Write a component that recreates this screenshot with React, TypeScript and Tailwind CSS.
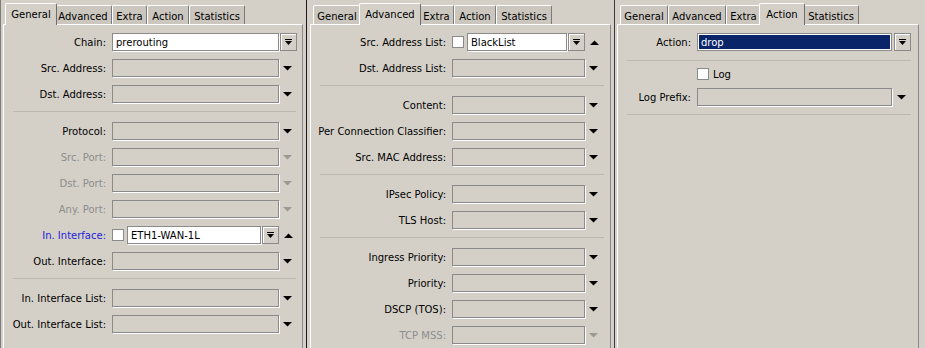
type Tone = "normal" | "disabled" | "blue";

interface Field {
	label: string;
	tone?: Tone;
	value?: string;
	check?: boolean;
}

type Item = Field | "sep";

const TABS: [string, string, string][] = [
	["General", "w-[48px]", "w-[52px]"],
	["Advanced", "w-[58px]", "w-[62px]"],
	["Extra", "w-[35px]", "w-[39px]"],
	["Action", "w-[42px]", "w-[46px]"],
	["Statistics", "w-[56px]", "w-[60px]"],
];

const labelColor = (tone?: Tone) =>
	tone === "disabled" ? "text-[#8d8d8d]" : tone === "blue" ? "text-[#2323d8]" : "text-black";

const Tri = (props: { up?: boolean; grey?: boolean }) => (
	<svg width="9" height="5" viewBox="0 0 9 5" className="block">
		<polygon
			points={props.up ? "0,5 9,5 4.5,0.5" : "0,0 9,0 4.5,4.5"}
			fill={props.grey ? "#9a9a94" : "#000"}
		/>
	</svg>
);

const DropButton = () => (
	<div className="w-[17px] h-[18px] shrink-0 border border-[#8a8a8a] bg-[#d4d0c8] shadow-[inset_1px_1px_0_#fff] flex items-center justify-center">
		<svg width="7" height="7" viewBox="0 0 7 7" className="block">
			<rect x="0" y="0" width="7" height="1" fill="#000" />
			<polygon points="0,2 7,2 3.5,6" fill="#000" />
		</svg>
	</div>
);

const Checkbox = () => (
	<div className="w-[12px] h-[12px] shrink-0 bg-white border border-[#8a8a8a]" />
);

const Input = (props: { value?: string; widthClass: string }) => (
	<div
		className={`${props.widthClass} h-[18px] border border-[#8a8a8a] shadow-[1px_1px_0_#fff] flex items-center pl-[3px] ${
			props.value !== undefined ? "bg-white" : "bg-[#d4d0c8]"
		}`}
	>
		{props.value}
	</div>
);

const Tabs = (props: { active: string }) => (
	<div className="flex items-end h-[24px] pl-[3px]">
		{TABS.map(([name, w, wActive], i) => {
			const on = name === props.active;
			return (
				<div
					key={name}
					className={
						on
							? `${wActive} h-[22px] -mb-px ${i === 0 ? "-ml-px -mr-[3px]" : "-mx-[2px]"} relative z-10 bg-[#d4d0c8] border-t border-l border-white border-r border-r-[#6f6f6f] rounded-t-[2px] flex items-start justify-center pt-[3px]`
							: `${w} h-[19px] bg-[#cbc7bf] border-t border-l border-white border-r border-r-[#7a7a7a] rounded-t-[2px] flex items-start justify-center pt-[3px]`
					}
				>
					{name}
				</div>
			);
		})}
	</div>
);

const Separator = (props: { cls?: string }) => (
	<div className={`h-[3px] ml-[9px] mr-[6px] border-t border-[#bcb8b0] ${props.cls || ""}`} />
);

const FormRow = (props: { f: Field; labelW: string; inputW: string; inner: string }) => {
	const { f } = props;
	let middle;
	let trailing;
	if (f.check) {
		middle = (
			<div className={`${props.inputW} flex items-center`}>
				<Checkbox />
				<div className="ml-[3px] flex-1 flex items-center">
					<Input value={f.value} widthClass={props.inner} />
					<div className="ml-px">
						<DropButton />
					</div>
				</div>
			</div>
		);
		trailing = (
			<div className="ml-[5px]">
				<Tri up />
			</div>
		);
	} else if (f.value !== undefined) {
		middle = <Input value={f.value} widthClass={props.inputW} />;
		trailing = (
			<div className="ml-px">
				<DropButton />
			</div>
		);
	} else {
		middle = <Input widthClass={props.inputW} />;
		trailing = (
			<div className="ml-[4px]">
				<Tri grey={f.tone === "disabled"} />
			</div>
		);
	}
	return (
		<div className="flex items-center h-[18px]">
			<div
				className={`${props.labelW} shrink-0 pr-[6px] text-right whitespace-nowrap ${labelColor(f.tone)}`}
			>
				{f.label}:
			</div>
			{middle}
			{trailing}
		</div>
	);
};

const FormPage = (props: {
	items: Item[];
	labelW: string;
	inputW: string;
	inner: string;
}) => (
	<div className="flex flex-col gap-2 pt-[8px]">
		{props.items.map((it, i) =>
			it === "sep" ? (
				<Separator key={i} />
			) : (
				<FormRow key={i} f={it} labelW={props.labelW} inputW={props.inputW} inner={props.inner} />
			),
		)}
	</div>
);

const general: Item[] = [
	{ label: "Chain", value: "prerouting" },
	{ label: "Src. Address" },
	{ label: "Dst. Address" },
	"sep",
	{ label: "Protocol" },
	{ label: "Src. Port", tone: "disabled" },
	{ label: "Dst. Port", tone: "disabled" },
	{ label: "Any. Port", tone: "disabled" },
	{ label: "In. Interface", tone: "blue", value: "ETH1-WAN-1L", check: true },
	{ label: "Out. Interface" },
	"sep",
	{ label: "In. Interface List" },
	{ label: "Out. Interface List" },
];

const advanced: Item[] = [
	{ label: "Src. Address List", value: "BlackList", check: true },
	{ label: "Dst. Address List" },
	"sep",
	{ label: "Content" },
	{ label: "Per Connection Classifier" },
	{ label: "Src. MAC Address" },
	"sep",
	{ label: "IPsec Policy" },
	{ label: "TLS Host" },
	"sep",
	{ label: "Ingress Priority" },
	{ label: "Priority" },
	{ label: "DSCP (TOS)" },
	{ label: "TCP MSS", tone: "disabled" },
];

export default function App() {
	return (
		<div
			className="w-[925px] h-[348px] overflow-hidden bg-[#d4d0c8] flex text-[10px] text-black"
			style={{ fontFamily: '"DejaVu Sans", "Liberation Sans", sans-serif' }}
		>
			{/* General */}
			<div className="w-[306px] h-full shrink-0 border-l border-[#7c7c7c] pl-[2px] flex flex-col">
				<Tabs active="General" />
				<div className="w-[300px] flex-1 border-t border-l border-white border-r border-r-[#8a8a8a]">
					<FormPage items={general} labelW="w-[108px]" inputW="w-[167px]" inner="w-[134px]" />
				</div>
			</div>

			{/* Advanced */}
			<div className="w-[308px] h-full shrink-0 border-l border-[#1a1a1a] pl-[3px] flex flex-col">
				<Tabs active="Advanced" />
				<div className="w-[301px] flex-1 border-t border-l border-white border-r border-r-[#8a8a8a]">
					<FormPage items={advanced} labelW="w-[141px]" inputW="w-[133px]" inner="w-[100px]" />
				</div>
			</div>

			{/* Action */}
			<div className="flex-1 h-full border-l border-[#3a3a3a] pl-[2px] flex flex-col">
				<Tabs active="Action" />
				<div className="w-[302px] flex-1 border-t border-l border-white border-r border-r-[#8a8a8a] pt-[8px] flex flex-col">
					<div className="flex items-center h-[18px]">
						<div className="w-[79px] shrink-0 pr-[6px] text-right">Action:</div>
						<div className="w-[195px] h-[18px] border border-[#8a8a8a] bg-white p-px">
							<div className="h-full bg-[#0a246a] text-white flex items-center pl-[2px]">drop</div>
						</div>
						<div className="ml-[2px]">
							<DropButton />
						</div>
					</div>
					<Separator cls="mt-[9px] mr-[7px]" />
					<div className="flex items-center h-[16px] mt-[3px] pl-[79px]">
						<Checkbox />
						<span className="ml-[4px]">Log</span>
					</div>
					<div className="flex items-center h-[18px] mt-[6px]">
						<div className="w-[79px] shrink-0 pr-[6px] text-right whitespace-nowrap">Log Prefix:</div>
						<Input widthClass="w-[195px]" />
						<div className="ml-[5px]">
							<Tri />
						</div>
					</div>
					<Separator cls="mt-[8px] mr-[7px]" />
				</div>
			</div>
		</div>
	);
}
